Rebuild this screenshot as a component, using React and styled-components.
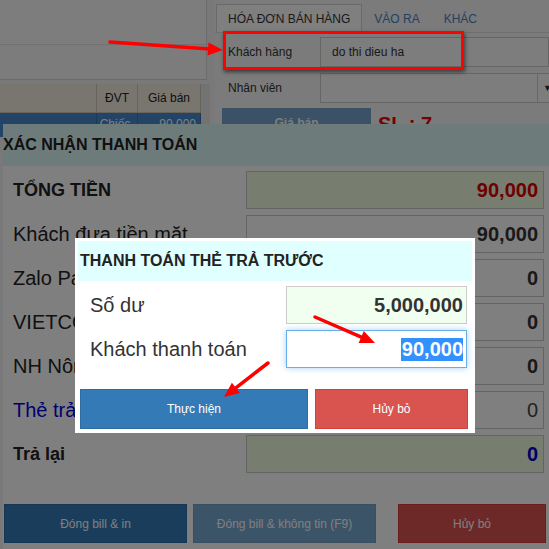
import React from "react";
import styled, { createGlobalStyle } from "styled-components";

const GlobalStyle = createGlobalStyle`
  html, body { margin: 0; padding: 0; background: #f3f3f3; }
  body { font-family: "Liberation Sans", Arial, sans-serif; }
  * { box-sizing: border-box; }
`;

const Screen = styled.div`
  position: relative;
  width: 549px;
  height: 549px;
  overflow: hidden;
  background: #f3f3f3;
  display: grid;
  grid-template-columns: 210px 1fr;
  column-gap: 5px;
  align-items: start;
`;

/* ---------- background app: left column ---------- */
const LeftCol = styled.div`
  display: flex;
  flex-direction: column;
`;

const InfoPanel = styled.div`
  width: 207px;
  height: 80px;
  background: #f7f7f7;
  border-right: 1px solid #d6d6d6;
  border-bottom: 1px solid #d6d6d6;
  display: grid;
  grid-template-rows: 45px 1fr;
`;

const InfoBand = styled.div`
  border-bottom: ${(p) => (p.$line ? "1px solid #e2e2e2" : "none")};
  background: ${(p) => (p.$line ? "#fafafa" : "#f9f9f9")};
`;

const Table = styled.div`
  margin-top: 4px;
  display: grid;
  grid-template-columns: 97px 41px 63px 9px;
`;

const HeadCell = styled.div`
  height: 29px;
  background: #f2ebdf;
  border-right: 1px solid #cfc7ba;
  border-bottom: 1px solid #cfc7ba;
  font-size: 12px;
  color: #222;
  display: flex;
  align-items: center;
  justify-content: center;
`;

const ScrollTrack = styled.div`
  background: #e6e6e6;
  position: relative;
`;

const ScrollThumb = styled.div`
  position: absolute;
  left: 1px;
  right: 0;
  top: 0;
  height: 40px;
  border-radius: 4px;
  background: #3a3a3a;
`;

const RowCell = styled.div`
  height: 24px;
  background: #4689cf;
  color: #fff;
  font-size: 12px;
  padding-top: 4px;
  text-align: ${(p) => p.$align || "left"};
  padding-right: 4px;
  border-right: 1px solid #3a72ad;
`;

/* ---------- background app: right column ---------- */
const RightCol = styled.div`
  display: flex;
  flex-direction: column;
  padding-top: 4px;
  background: #f6f6f6;
  min-height: 130px;
`;

const TabBar = styled.div`
  display: flex;
  height: 29px;
  padding-left: 1px;
  border-bottom: 1px solid #dcdcdc;
`;

const Tab = styled.div`
  padding: 0 11px;
  font-size: 12px;
  display: flex;
  align-items: center;
  color: ${(p) => (p.$active ? "#333" : "#4a82c0")};
  background: ${(p) => (p.$active ? "#ffffff" : "transparent")};
  border: 1px solid ${(p) => (p.$active ? "#d4d4d4" : "transparent")};
  border-bottom: none;
`;

const FormRow = styled.div`
  display: grid;
  grid-template-columns: 105px 1fr;
  align-items: center;
  margin-top: ${(p) => p.$gap || 0}px;
`;

const FormLabel = styled.div`
  padding-left: 13px;
  font-size: 12px;
  color: #333;
`;

const TextBox = styled.div`
  height: 30px;
  border: 1px solid #cccccc;
  background: #fafafa;
  font-size: 12px;
  color: #333;
  display: flex;
  align-items: center;
  padding-left: 11px;
`;

const SelectBox = styled.div`
  height: 30px;
  border: 1px solid #cccccc;
  background: #fafafa;
  display: grid;
  grid-template-columns: 1fr 16px;
  width: calc(100% + 5px);
`;

const SelectArrow = styled.div`
  border-left: 1px solid #cccccc;
  font-size: 9px;
  color: #333;
  display: flex;
  align-items: center;
  padding-left: 5px;
`;

const ActionRow = styled.div`
  display: flex;
  align-items: flex-start;
  gap: 7px;
  margin-top: 5px;
  padding-left: 7px;
`;

const FadedButton = styled.div`
  width: 149px;
  height: 30px;
  background: #337ab7;
  opacity: 0.65;
  color: #fff;
  font-size: 12px;
  font-weight: bold;
  display: flex;
  justify-content: center;
  padding-top: 8px;
`;

const CountText = styled.div`
  color: #ee0000;
  font-weight: bold;
  font-size: 20px;
  padding-top: 5px;
`;

/* ---------- confirm dialog (behind overlay) ---------- */
const ConfirmDialog = styled.div`
  position: absolute;
  left: 3px;
  top: 124px;
  right: 0;
  bottom: 0;
  background: #ffffff;
  display: flex;
  flex-direction: column;
`;

const ConfirmHeader = styled.div`
  height: 42px;
  background: #dcf6f6;
  color: #222;
  font-weight: bold;
  font-size: 16px;
  display: flex;
  align-items: center;
`;

const ConfirmBody = styled.div`
  padding: 5px 5px 0 10px;
  display: flex;
  flex-direction: column;
  gap: 6px;
`;

const PayRow = styled.div`
  display: grid;
  grid-template-columns: 233px 1fr;
  align-items: center;
  height: 38px;
`;

const PayLabel = styled.div`
  font-size: ${(p) => (p.$strong ? 18 : 20)}px;
  font-weight: ${(p) => (p.$strong ? "bold" : "normal")};
  color: ${(p) => p.$color || "#222"};
  white-space: nowrap;
`;

const AmountBox = styled.div`
  height: 38px;
  border: 1px solid #c8c8c8;
  background: ${(p) => (p.$tint ? "#eefadf" : "#ffffff")};
  color: ${(p) => p.$color || "#333"};
  font-size: 20px;
  font-weight: ${(p) => (p.$light ? "normal" : "bold")};
  display: flex;
  align-items: center;
  justify-content: flex-end;
  padding-right: 5px;
`;

const ConfirmFooter = styled.div`
  margin-top: 31px;
  padding: 0 3px 0 1px;
  display: flex;
  justify-content: space-between;
`;

const FooterGroup = styled.div`
  display: flex;
  gap: 6px;
`;

const FooterButton = styled.div`
  width: ${(p) => p.$w}px;
  height: 39px;
  background: ${(p) => (p.$danger ? "#d9534f" : "#337ab7")};
  border: 1px solid ${(p) => (p.$danger ? "#d43f3a" : "#2e6da4")};
  opacity: ${(p) => (p.$disabled ? 0.65 : 1)};
  color: #fff;
  font-size: 12px;
  display: flex;
  align-items: center;
  justify-content: center;
`;

/* ---------- overlay + prepaid card dialog ---------- */
const Backdrop = styled.div`
  position: absolute;
  inset: 0;
  background: rgba(0, 0, 0, 0.5);
`;

const PrepaidDialog = styled.div`
  position: absolute;
  left: 75px;
  top: 238px;
  width: 400px;
  background: #ffffff;
  padding: 3px 3px 4px;
`;

const PrepaidHeader = styled.div`
  height: 40px;
  background: #e0ffff;
  color: #222;
  font-weight: bold;
  font-size: 16px;
  display: flex;
  align-items: center;
  padding-left: 2px;
`;

const PrepaidBody = styled.div`
  padding: 5px 5px 0 12px;
  display: flex;
  flex-direction: column;
  gap: 6px;
`;

const PrepaidRow = styled.div`
  display: grid;
  grid-template-columns: 196px 1fr;
  align-items: center;
  height: 38px;
`;

const PrepaidLabel = styled.div`
  font-size: 20px;
  color: #333;
`;

const PrepaidField = styled.div`
  height: 38px;
  border: 1px solid ${(p) => (p.$focus ? "#66afe9" : "#cccccc")};
  box-shadow: ${(p) =>
    p.$focus ? "0 0 6px rgba(102,175,233,0.6)" : "none"};
  background: ${(p) => (p.$focus ? "#ffffff" : "#f0fff0")};
  color: #333;
  font-size: 20px;
  font-weight: bold;
  display: flex;
  align-items: center;
  justify-content: flex-end;
  padding-right: 3px;
`;

const Selected = styled.span`
  background: #3390ff;
  color: #ffffff;
  line-height: 23px;
  padding: 0 0 0 1px;
`;

const PrepaidActions = styled.div`
  margin-top: 21px;
  padding-left: 2px;
  display: flex;
  gap: 7px;
`;

const DialogButton = styled.div`
  width: ${(p) => p.$w}px;
  height: 40px;
  background: ${(p) => (p.$danger ? "#d9534f" : "#337ab7")};
  border: 1px solid ${(p) => (p.$danger ? "#d43f3a" : "#2e6da4")};
  color: #fff;
  font-size: 12px;
  display: flex;
  align-items: center;
  justify-content: center;
`;

/* ---------- annotations ---------- */
const HighlightFrame = styled.div`
  position: absolute;
  left: 223px;
  top: 31px;
  width: 241px;
  height: 39px;
  border: 3px solid #ff0000;
  box-shadow: 1px 2px 4px rgba(0, 0, 0, 0.55);
`;

const ArrowLayer = styled.svg`
  position: absolute;
  left: 0;
  top: 0;
  pointer-events: none;
`;

function Arrow({ x1, y1, x2, y2 }) {
  const dx = x2 - x1;
  const dy = y2 - y1;
  const len = Math.hypot(dx, dy);
  const ux = dx / len;
  const uy = dy / len;
  const L = 15;
  const W = 6.5;
  const bx = x2 - ux * L;
  const by = y2 - uy * L;
  const px = -uy;
  const py = ux;
  const pts = `${x2},${y2} ${bx + px * W},${by + py * W} ${bx - px * W},${by - py * W}`;
  return (
    <g>
      <line
        x1={x1}
        y1={y1}
        x2={bx + ux * 2}
        y2={by + uy * 2}
        stroke="#ff0000"
        strokeWidth="3.5"
        strokeLinecap="round"
      />
      <polygon points={pts} fill="#ff0000" />
    </g>
  );
}

const payRows = [
  { label: "TỔNG TIỀN", strong: true, value: "90,000", tint: true, color: "#dd0000" },
  { label: "Khách đưa tiền mặt", value: "90,000" },
  { label: "Zalo Pay", value: "0" },
  { label: "VIETCOMBANK", value: "0" },
  { label: "NH Nông nghiệp", value: "0" },
  { label: "Thẻ trả trước", value: "0", labelColor: "#0000dd", light: true, color: "#444" },
  { label: "Trả lại", strong: true, value: "0", tint: true, color: "#0000cc" },
];

export default function App() {
  return (
    <>
      <GlobalStyle />
      <Screen>
        <LeftCol>
          <InfoPanel>
            <InfoBand $line />
            <InfoBand />
          </InfoPanel>
          <Table>
            <HeadCell />
            <HeadCell>ĐVT</HeadCell>
            <HeadCell>Giá bán</HeadCell>
            <ScrollTrack>
              <ScrollThumb style={{ top: 31 }} />
            </ScrollTrack>
            <RowCell />
            <RowCell $align="center">Chiếc</RowCell>
            <RowCell $align="right">90,000</RowCell>
            <ScrollTrack />
          </Table>
        </LeftCol>

        <RightCol>
          <TabBar>
            <Tab $active>HÓA ĐƠN BÁN HÀNG</Tab>
            <Tab>VÀO RA</Tab>
            <Tab>KHÁC</Tab>
          </TabBar>
          <FormRow $gap={4}>
            <FormLabel>Khách hàng</FormLabel>
            <TextBox>do thi dieu ha</TextBox>
          </FormRow>
          <FormRow $gap={6}>
            <FormLabel>Nhân viên</FormLabel>
            <SelectBox>
              <div />
              <SelectArrow>▼</SelectArrow>
            </SelectBox>
          </FormRow>
          <ActionRow>
            <FadedButton>Giá bán</FadedButton>
            <CountText>SL : 7</CountText>
          </ActionRow>
        </RightCol>

        <ConfirmDialog>
          <ConfirmHeader>XÁC NHẬN THANH TOÁN</ConfirmHeader>
          <ConfirmBody>
            {payRows.map((r) => (
              <PayRow key={r.label}>
                <PayLabel $strong={r.strong} $color={r.labelColor}>
                  {r.label}
                </PayLabel>
                <AmountBox $tint={r.tint} $color={r.color} $light={r.light}>
                  {r.value}
                </AmountBox>
              </PayRow>
            ))}
          </ConfirmBody>
          <ConfirmFooter>
            <FooterGroup>
              <FooterButton $w={183}>Đóng bill &amp; in</FooterButton>
              <FooterButton $w={183} $disabled>
                Đóng bill &amp; không tin (F9)
              </FooterButton>
            </FooterGroup>
            <FooterButton $w={148} $danger>
              Hủy bỏ
            </FooterButton>
          </ConfirmFooter>
        </ConfirmDialog>

        <Backdrop />

        <PrepaidDialog>
          <PrepaidHeader>THANH TOÁN THẺ TRẢ TRƯỚC</PrepaidHeader>
          <PrepaidBody>
            <PrepaidRow>
              <PrepaidLabel>Số dư</PrepaidLabel>
              <PrepaidField>5,000,000</PrepaidField>
            </PrepaidRow>
            <PrepaidRow>
              <PrepaidLabel>Khách thanh toán</PrepaidLabel>
              <PrepaidField $focus>
                <Selected>90,000</Selected>
              </PrepaidField>
            </PrepaidRow>
          </PrepaidBody>
          <PrepaidActions>
            <DialogButton $w={228}>Thực hiện</DialogButton>
            <DialogButton $w={153} $danger>
              Hủy bỏ
            </DialogButton>
          </PrepaidActions>
        </PrepaidDialog>

        <HighlightFrame />
        <ArrowLayer width="549" height="549" viewBox="0 0 549 549">
          <Arrow x1={110} y1={42} x2={223} y2={50} />
          <Arrow x1={315} y1={317} x2={375} y2={343} />
          <Arrow x1={268} y1={363} x2={224} y2={397} />
        </ArrowLayer>
      </Screen>
    </>
  );
}
